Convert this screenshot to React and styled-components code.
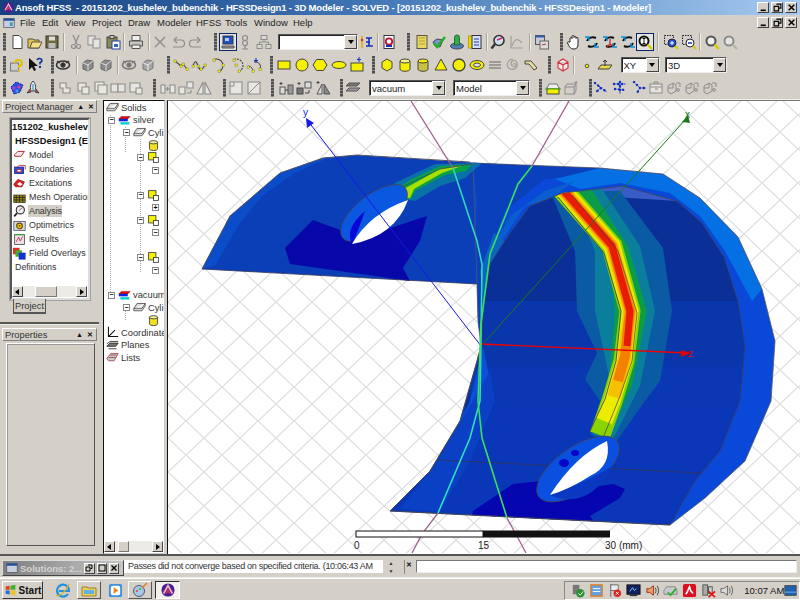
import React from 'react';
import styled, { createGlobalStyle } from 'styled-components';

const Global = createGlobalStyle`
  html, body { margin: 0; padding: 0; background: #d4d0c8; overflow: hidden; }
  * { box-sizing: border-box; }
  svg { flex: none; }
`;
const FONT = `"Liberation Sans", Arial, sans-serif`;

const Page = styled.div`
  width: 800px; height: 600px; background: #d4d0c8; display: flex; flex-direction: column;
  font-family: ${FONT}; font-size: 9px; color: #111; overflow: hidden;
`;
const TitleBar = styled.div`
  height: 15px; flex: none; display: flex; align-items: center; padding: 0 2px 0 3px;
  background: linear-gradient(90deg, #17407f 0%, #3f74b4 45%, #a6caf0 100%);
`;
const TitleText = styled.div`
  flex: 1; min-width: 0; margin-left: 1px; color: #fff; font: bold 9.5px ${FONT}; white-space: nowrap; letter-spacing: -0.17px; overflow: hidden;
`;
const WinButtons = styled.div`display: flex; gap: 2px; margin-right: 1px; flex: none;`;
const WinBtn = styled.div`
  width: 12px; height: 11px; background: #d4d0c8; border: 1px solid; border-color: #fff #404040 #404040 #fff;
  display: flex; align-items: center; justify-content: center;
`;
const MenuBar = styled.div`
  height: 15px; flex: none; display: flex; align-items: center; padding: 0 2px 0 3px; font-size: 9.5px;
`;
const MenuList = styled.div`display: flex; flex: 1; padding-left: 5px;`;
const MenuItem = styled.span`width: ${p => p.$w}px; color: #222; white-space: nowrap;`;

const ToolRow = styled.div`
  height: ${p => p.$h}px; flex: none; display: flex; align-items: center;
`;
const Grip = styled.div`
  flex: none; width: 3px; height: 18px; margin-left: ${p => p.$ml}px;
  background: repeating-linear-gradient(180deg, #505050 0 2px, #8a8a8a 2px 3px);
`;
const Sep = styled.div`
  flex: none; width: 2px; height: 18px; margin-left: ${p => p.$ml}px;
  border-left: 1px solid #a8a498; border-right: 1px solid #eeeeea;
`;
const ToolBtn = styled.div`
  flex: none; width: 18px; height: 18px; margin-left: ${p => p.$ml}px; display: flex; align-items: center; justify-content: center;
  ${p => p.$on && `border: 1px solid #0a246a; background: #e6e4de;`}
`;
const Combo = styled.div`
  flex: none; width: ${p => p.$w}px; height: 16px; margin-left: ${p => p.$ml}px; background: #fff;
  border: 1px solid; border-color: #555 #eee #eee #555; display: flex; align-items: center; padding-left: 2px;
  font-size: 9.5px; color: #222; box-shadow: inset 1px 1px 0 #222;
`;
const ComboText = styled.span`flex: 1; overflow: hidden; white-space: nowrap;`;
const ComboArrow = styled.div`
  flex: none; width: 13px; height: 14px; background: #d4d0c8; border: 1px solid; border-color: #fff #444 #444 #fff;
  display: flex; align-items: center; justify-content: center;
  &::after { content: ''; border: 3px solid transparent; border-top: 4px solid #000; margin-top: 3px; }
`;

const Main = styled.div`height: 455px; flex: none; display: flex; min-height: 0; border-top: 1px solid #efefe9;`;
const LeftCol = styled.div`width: 100px; flex: none; display: flex; flex-direction: column; padding: 0 3px 8px 2px;`;
const PaneHead = styled.div`
  height: 13px; flex: none; border: 1px solid; border-color: #fff #808080 #808080 #fff; white-space: nowrap;
  display: flex; align-items: center; padding: 0 3px 0 2px; font-size: 9.3px; color: #333;
`;
const PaneTitle = styled.span`flex: 1;`;
const PaneBtn = styled.span`margin-left: 4px; font-size: 7px; font-weight: bold; color: #111;`;
const ProjectWrap = styled.div`padding: 5px 0 0 8px; display: flex; flex-direction: column;`;
const ProjectBox = styled.div`
  width: 80px; height: 182px; background: #fff; border: 2px solid; border-color: #555 #ddd #ddd #555;
  display: flex; flex-direction: column; overflow: hidden; outline: 1px solid #a0a0a0;
`;
const ProjectList = styled.div`flex: 1; overflow: hidden;`;
const ProjRow = styled.div`
  height: 14px; display: flex; align-items: center; white-space: nowrap; font-size: ${p => p.$bold ? 9.3 : 8.9}px; color: ${p => p.$bold ? '#111' : '#333'};
  padding-left: ${p => p.$pad}px; font-weight: ${p => p.$bold ? 'bold' : 'normal'};
`;
const ProjIcon = styled.span`width: 15px; flex: none; display: flex; justify-content: center; margin-right: 1px;`;
const ProjLabel = styled.span`background: ${p => p.$sel ? '#d4d0c8' : 'transparent'}; padding: 1px 0 1px 1px;`;
const HScroll = styled.div`
  height: 11px; flex: none; display: flex; background: #ecebe6; margin: 0 1px 1px 0;
`;
const ScrollBtn = styled.div`
  width: 11px; background: #d4d0c8; border: 1px solid; border-color: #fff #444 #444 #fff;
  display: flex; align-items: center; justify-content: center;
  &::after { content: ''; border: 3px solid transparent; ${p => p.$dir === 'l' ? 'border-right: 4px solid #000; margin-left: -4px;' : 'border-left: 4px solid #000; margin-left: 4px;'} }
`;
const ScrollTrack = styled.div`flex: 1; padding-left: ${p => p.$pad}px;`;
const Thumb = styled.div`
  width: ${p => p.$w}px; height: 100%; background: #d4d0c8; border: 1px solid; border-color: #fff #777 #777 #fff;
`;
const Tab = styled.div`
  margin: -1px 0 0 3px; width: 33px; height: 15px; border: 1px solid #555; border-top: none; background: #d4d0c8;
  border-bottom: 2px solid #555; font-size: 9.3px; display: flex; align-items: center; justify-content: center; color: #333;
`;
const Divider = styled.div`height: 3px; flex: none; margin: 8px -2px 3px -2px; background: #555; border-bottom: 1px solid #eee;`;
const PropsBox = styled.div`
  flex: 1; margin: 2px 2px 0 4px; border: 1px solid; border-color: #fff #555 #555 #fff; background: #d4d0c8; box-shadow: inset 1px 1px 0 #999;
`;

const TreeCol = styled.div`
  width: 62px; flex: none; margin-left: 3px; background: #fff; border: 1px solid; border-color: #111 #ccc #ccc #111;
  display: flex; flex-direction: column; position: relative; overflow: hidden;
`;
const TreeBody = styled.div`flex: 1; padding-top: 0.5px;`;
const TreeGuide = styled.svg`position: absolute; left: 0; top: 0; pointer-events: none;`;
const TreeRow = styled.div`
  position: relative; height: 12.5px; display: flex; align-items: center; padding-left: ${p => p.$pad}px; white-space: nowrap; font-size: 9.3px; color: #333; gap: 2px;
`;
const Expander = styled.span`
  width: 7px; height: 7px; flex: none; background: #fff; border: 1px solid #888; display: flex; align-items: center; justify-content: center;
  font: bold 7px/6px ${FONT}; color: #000; margin-right: 1px;
`;
const CanvasWrap = styled.div`flex: 1; margin-left: 2px; border-left: 1px solid #111; border-top: 1px solid #777; background: #fff; min-width: 0; overflow: hidden;`;
const CanvasSvg = styled.svg`display: block;`;

const DockBar = styled.div`
  height: 24px; flex: none; border-top: 2px solid #555; display: flex; align-items: flex-start; padding: 4px 2px 0 2px;
  border-bottom: 1px solid #efefe9;
`;
const MiniWin = styled.div`
  width: 122px; height: 16px; flex: none; background: linear-gradient(90deg, #7f7f7f, #c6c6c6); display: flex; align-items: center; padding: 0 4px 0 3px;
  border: 1px solid; border-color: #ddd #444 #444 #ddd;
`;
const MiniTitle = styled.span`flex: 1; margin-left: 2px; font: bold 9.5px ${FONT}; color: #d4d4d4; white-space: nowrap;`;
const MiniBtn = styled.div`
  width: 12px; height: 11px; margin-left: 2px; background: #d4d0c8; border: 1px solid; border-color: #fff #444 #444 #fff; display: flex; align-items: center; justify-content: center;
`;
const StatusField = styled.div`
  width: 259px; height: 13px; flex: none; background: #fff; padding-left: 4px; font-size: 9px; letter-spacing: -0.3px; color: #333; white-space: nowrap; overflow: hidden; line-height: 13px;
`;
const Spinner = styled.div`flex: none; width: 12px; height: 14px; margin-left: 2px; display: flex; flex-direction: column; justify-content: space-between; align-items: center; font-size: 5px; line-height: 6px; color: #333;`;
const DockClose = styled.div`
  flex: none; width: 8px; height: 14px; margin-left: 7px; font: bold 7px/10px ${FONT}; text-align: center; color: #111; border-left: 1px solid #888;
`;
const CmdInput = styled.div`
  flex: 1; margin-left: 4px; margin-right: 1px; height: 13px; background: #fff; border: 1px solid; border-color: #777 #eee #eee #777;
`;

const Taskbar = styled.div`height: 22px; flex: none; display: flex; align-items: center; padding: 1px 0 0 2px; border-top: 1px solid #fff;`;
const StartBtn = styled.div`
  width: 41px; height: 18px; flex: none; border: 1px solid; border-color: #fff #333 #333 #fff; display: flex; align-items: center; justify-content: center; gap: 2px;
  font: bold 10px ${FONT}; color: #111;
`;
const TaskIcon = styled.div`
  flex: none; width: ${p => p.$w}px; height: 18px; margin-left: ${p => p.$ml}px; display: flex; align-items: center; justify-content: center;
  ${p => p.$raised && `border: 1px solid; border-color: #fff #555 #555 #fff;`}
  ${p => p.$active && `border: 1px solid; border-color: #333 #fff #fff #333; background: #f2f0ea;`}
`;
const Tray = styled.div`
  margin-left: auto; height: 19px; width: 236px; flex: none; display: flex; align-items: center; border: 1px solid; border-color: #888 #fff #fff #888; padding-left: 3px;
`;
const TrayIcon = styled.div`flex: none; width: ${p => p.$w || 18.7}px; display: flex; justify-content: center;`;
const Clock = styled.span`flex: none; margin-left: 8px; width: 38px; font-size: 9.5px; color: #111; white-space: nowrap;`;

const Ic = ({ s = 16, children }) => <svg width={s} height={s} viewBox="0 0 16 16">{children}</svg>;

const gr = '#8c8c8c', dk = '#555', yl = '#f4f000';
const zoomI = (c, inner) => <g><circle cx="7" cy="7" r="4.5" fill={inner || '#fff'} stroke={c} strokeWidth="2" /><path d="M10.5 10.5 15 15" stroke={c === gr ? '#b5b5a0' : '#d8c800'} strokeWidth="2.4" /></g>;
const rot = (c1, c2, extra) => <g fill="none" strokeWidth="2"><path d="M3 7a6 5 0 0 1 9-3" stroke={c1} /><path d="M13 9a6 5 0 0 1-9 3" stroke={c2} /><path d="M1 3h4v4M15 13h-4V9" stroke="#0090e0" strokeWidth="1.4" />{extra}</g>;
const eye = (c) => <g fill="none" stroke={c}><ellipse cx="8" cy="8" rx="6.5" ry="4" strokeWidth="1.6" /><circle cx="8" cy="8" r="2.2" fill={c} /><path d="M2 4l3 2M14 4l-3 2" strokeWidth="1.4" /></g>;
const grayShape = (d) => <path d={d} fill="#e8e6e0" stroke={gr} strokeWidth="1.1" />;
const pts = (list) => list.map(([x, y], i) => <rect key={i} x={x - 1} y={y - 1} width="2.4" height="2.4" fill={yl} stroke="#333" strokeWidth=".3" />);
const blueDots = (d) => <g><path d={d} fill="none" stroke="#1030c0" strokeWidth="1" strokeDasharray="1.5 1" /><path d={d} fill="none" stroke="#1030c0" strokeWidth="2.4" strokeDasharray=".1 4" strokeLinecap="round" /></g>;
const cluster = <g fill="none" stroke={gr} strokeWidth="1"><path d="M2 6l5-3 3 2v6l-5 3-3-2zM7 3v5l-5 0M10 3h4v4" /><circle cx="12" cy="10" r="1.4" /></g>;

const ICONS = {
  new: <path d="M4 1.5h6l3 3v10H4z" fill="#fff" stroke="#444" />,
  open: <g><path d="M1 5h5l1 1h5v8H1z" fill="#e6c44c" stroke="#554" /><path d="M3 14l2-6h10l-3 6z" fill="#f5e08a" stroke="#554" /></g>,
  save: <g><rect x="2" y="2" width="12" height="12" fill="#6c6c3a" stroke="#333" /><rect x="5" y="2.5" width="6" height="4" fill="#ddd" /><rect x="4.5" y="9" width="7" height="5" fill="#bbb" /></g>,
  cut: <g fill="none" stroke={gr} strokeWidth="1.2"><path d="M5 1l4 9M11 1L7 10" /><circle cx="5.5" cy="12.5" r="2" /><circle cx="10.5" cy="12.5" r="2" /></g>,
  copy: <g fill="#e6e4de" stroke={gr}><rect x="2" y="2" width="7" height="9" /><rect x="7" y="5" width="7" height="9" /></g>,
  paste: <g><rect x="2" y="3" width="10" height="11" fill="#8a8a50" stroke="#444" /><rect x="5" y="1.5" width="4" height="3" fill="#ccc" stroke="#444" /><rect x="7" y="7" width="8" height="8" fill="#fff" stroke="#2040a0" /><rect x="9" y="10" width="4" height="3" fill="#3060c0" /></g>,
  print: <g fill="#c8c8c0" stroke={dk}><path d="M4 1.5h8v5H4z" fill="#eee" /><path d="M1.5 7h13v5h-13z" /><path d="M4 11h8v3.5H4z" fill="#eee" /></g>,
  xg: <path d="M3 3l10 10M13 3L3 13" stroke={gr} strokeWidth="1.4" />,
  undo: <g fill="none" stroke={gr} strokeWidth="1.2"><path d="M4 6h7a3.5 3.5 0 0 1 0 7H3" /><path d="M7 3L4 6l3 3" /></g>,
  redo: <g fill="none" stroke={gr} strokeWidth="1.2"><path d="M12 6H5a3.5 3.5 0 0 0 0 7h8" /><path d="M9 3l3 3-3 3" /></g>,
  monitor: <g><rect x="3" y="2" width="10" height="8" fill="#2050c8" stroke="#334" /><path d="M2 12h12v2H2z" fill="#999" stroke="#555" /><rect x="5" y="4" width="4" height="3" fill="#bcd" /></g>,
  mon2: <g fill="none" stroke={gr} strokeWidth="1.2"><circle cx="8" cy="4" r="2.5" /><circle cx="8" cy="9" r="2.5" /><path d="M8 12v3M5 15h6" /></g>,
  net: <g fill="#d8d8d0" stroke={gr}><rect x="5" y="1.5" width="6" height="4" /><rect x="1" y="10.5" width="5" height="4" /><rect x="10" y="10.5" width="5" height="4" /><path d="M8 6v2M3.5 10V8h9v2" fill="none" /></g>,
  pipe: <g fill="none" strokeWidth="1.6"><path d="M3 2v12" stroke="#e0b000" /><path d="M7 4h6M7 8h4M7 12h7M10 4v8" stroke="#1030c0" /><circle cx="3" cy="6" r="1.2" fill="#e02020" stroke="none" /></g>,
  oicon: <g><rect x="3" y="1.5" width="10" height="13" fill="#fff" stroke="#334" /><circle cx="8" cy="7.5" r="3.2" fill="none" stroke="#c01030" strokeWidth="1.8" /><path d="M5 12h6" stroke="#1030c0" strokeWidth="2" /></g>,
  ydoc: <g><rect x="3" y="1.5" width="10" height="13" fill="#e8d860" stroke="#554" /><path d="M5.5 4h5M5.5 7h5M5.5 10h5" stroke="#806000" strokeDasharray="1 1" /></g>,
  check: <g><path d="M2 8l4-3 6 1-3 7-5-1z" fill="#8090d0" stroke="#446" /><path d="M3 9l3 4 8-10" fill="none" stroke="#20b020" strokeWidth="2.4" /></g>,
  fig: <g><ellipse cx="8" cy="12" rx="6.5" ry="3" fill="#5080b0" stroke="#446" /><path d="M8 1a2.5 2.5 0 0 1 2.5 2.5V11h-5V3.5A2.5 2.5 0 0 1 8 1z" fill="#30b040" stroke="#264" /></g>,
  ydoc2: <g><rect x="1.5" y="2" width="4" height="12" fill="#f0d800" stroke="#aa0" /><rect x="5" y="1.5" width="9" height="13" fill="#d8e0f8" stroke="#334" /><path d="M7 5h5M7 8h5M7 11h5" stroke="#2040b0" /></g>,
  glass: <g><circle cx="9" cy="6.5" r="5" fill="#d0e0f0" stroke="#333" strokeWidth="1.6" /><path d="M5 10l-3.5 4.5" stroke="#333" strokeWidth="2.4" /><path d="M7 6l5-2" stroke="#d02070" strokeWidth="1.4" /></g>,
  curveg: <g fill="none" stroke="#a0a098" strokeWidth="1.2"><path d="M2 2v12h12" /><path d="M3 12C6 4 9 4 13 9" /></g>,
  win: <g><rect x="1.5" y="1.5" width="9" height="9" fill="#c8c8d8" stroke="#555" /><rect x="1.5" y="1.5" width="9" height="2" fill="#3060b0" /><rect x="6" y="7" width="8.5" height="8" fill="#ddd" stroke="#666" /><path d="M8 11l4-1" stroke="#c03030" /></g>,
  hand: <path d="M4 8V4.5a1 1 0 0 1 2 0V2.5a1 1 0 0 1 2 0v1a1 1 0 0 1 2 0v1a1 1 0 0 1 2 0V10c0 3-1 5-4 5s-4-1-6-5l-.5-1.2c-.3-1 1-1.4 1.5-.6z" fill="#fff" stroke="#222" />,
  rot1: rot('#111', '#111'),
  rot2: rot('#111', '#111', <g><path d="M8 5v5M8 10l-3 3M8 10l3 2" stroke="#d02020" strokeWidth="1.2" /></g>),
  rot3: rot('#111', '#111'),
  zoomOn: <g>{zoomI('#111', '#fff')}<path d="M7 4.5v5M5.5 4.5h3M5.5 9.5h3" stroke="#111" /></g>,
  zin: <g><rect x="1.5" y="1.5" width="9" height="9" fill="none" stroke="#222" strokeDasharray="1.5 1" /><circle cx="9" cy="9" r="4" fill="#2050e0" stroke="#223" /><path d="M7 9h4M9 7v4" stroke="#fff" /><path d="M12 12l3 3" stroke="#d8c800" strokeWidth="2" /></g>,
  zout: <g><rect x="1.5" y="1.5" width="9" height="9" fill="none" stroke="#222" strokeDasharray="1.5 1" /><circle cx="9" cy="9" r="4" fill="#fff" stroke="#223" /><path d="M7 9h4" stroke="#2040c0" strokeWidth="1.6" /><path d="M12 12l3 3" stroke="#d8c800" strokeWidth="2" /></g>,
  zy: zoomI('#555', '#eee'),
  zg: zoomI(gr, '#e6e4de'),
  help: <g><rect x="1.5" y="6" width="8" height="8" fill="#ccc" stroke="#777" /><path d="M6 6a3.5 3 0 1 1 4 3v2" fill="none" stroke="#e0c000" strokeWidth="2" /><rect x="9" y="12.500" width="2" height="2" fill="#e0c000" /></g>,
  what: <g><path d="M2 1v12l3-3 2 4 2-1-2-4h4z" fill="#111" /><path d="M10 3a2.500 2 0 1 1 3 2.500v2" fill="none" stroke="#1030a0" strokeWidth="1.600" /><rect x="12" y="9" width="2" height="2" fill="#1030a0" /></g>,
  eye: eye('#333'),
  eye2: eye('#777'),
  cubeEye: <g><path d="M3 6l4-3 6 1v7l-5 3-5-2z" fill="#8a8a8a" stroke="#666" /><path d="M3 6l5 2 5-4M8 8v6" fill="none" stroke="#ddd" /></g>,
  cubeEye2: <g><path d="M3 6l4-3 6 1v7l-5 3-5-2z" fill="#a4a4a4" stroke="#777" /><path d="M3 6l5 2 5-4M8 8v6" fill="none" stroke="#eee" /></g>,
  poly: <g><path d="M2 4l6 5 2-2 4 5" fill="none" stroke="#444" strokeWidth="1.1" />{pts([[2, 4], [8, 9], [10, 7], [14, 12]])}</g>,
  spline: <g><path d="M2 9c2-7 4-4 5 0s4 5 7-1" fill="none" stroke="#444" strokeWidth="1.1" />{pts([[2, 9], [7, 9], [14, 8], [10, 12]])}</g>,
  arc3: <g><path d="M4 2.5a6 6 0 0 1 5 12" fill="none" stroke="#444" strokeWidth="1.1" />{pts([[4, 3], [9, 14], [13, 8]])}</g>,
  arc4: <g><path d="M5 2.5a6 6 0 0 1 5 12" fill="none" stroke="#444" strokeWidth="1.1" strokeDasharray="2 1" />{pts([[5, 3], [10, 14], [7, 8]])}</g>,
  arcp: <g><path d="M1 10c3-2 5 0 6 4M8 5a5 5 0 0 1 6 7" fill="none" stroke="#444" />{pts([[2, 10], [7, 14], [14, 12]])}<path d="M10 1v5M8 3.500h4" stroke="#1030c0" /></g>,
  rect: <rect x="2" y="4" width="12" height="8" fill={yl} stroke="#444" />,
  circ: <circle cx="8" cy="8" r="6" fill={yl} stroke="#444" />,
  hex: <path d="M4.5 2.5h7L15 8l-3.5 5.5h-7L1 8z" fill={yl} stroke="#444" />,
  ell: <ellipse cx="8" cy="8" rx="7" ry="3.5" fill={yl} stroke="#444" />,
  rectp: <g><rect x="2" y="6" width="12" height="8" fill={yl} stroke="#444" /><path d="M10 0v5M8 2.500h4" stroke="#1030c0" /></g>,
  box: <path d="M3 5l5-3 5 3v6l-5 3-5-3z" fill={yl} stroke="#444" />,
  cyl: <g><path d="M3 4v8c0 3 10 3 10 0V4z" fill={yl} stroke="#444" /><ellipse cx="8" cy="4" rx="5" ry="2" fill="#f8f880" stroke="#444" /></g>,
  cyl2: <g><path d="M3 4v8c0 3 10 3 10 0V4z" fill="#c8c040" stroke="#444" /><ellipse cx="8" cy="4" rx="5" ry="2" fill={yl} stroke="#444" /></g>,
  cone: <g><path d="M8 2l6 11H2z" fill={yl} stroke="#444" /></g>,
  sph: <circle cx="8" cy="8" r="6" fill={yl} stroke="#444" strokeWidth="1.3" />,
  tor: <g><ellipse cx="8" cy="8" rx="7" ry="4.5" fill={yl} stroke="#444" /><ellipse cx="8" cy="8" rx="3.5" ry="2" fill="#ddd" stroke="#444" /></g>,
  stackg: <g fill="none" stroke="#888" strokeWidth="1.6"><path d="M2 5h12M2 8h12M2 11h12" /></g>,
  spir: <path d="M8 8a1.5 1.5 0 1 1 1.5 1.5A3 3 0 1 1 12 6a5 5 0 1 1-4-3.5" fill="none" stroke="#a0a098" strokeWidth="1.2" />,
  bend: <path d="M2 4h6l6 7-3 2-5-6H2z" fill="#e8e0a0" stroke="#444" />,
  redcube: <path d="M3 5l5-3 5 3v6l-5 3-5-3zM3 5l5 3 5-3M8 8v6" fill="#f8e8e8" stroke="#d03040" strokeWidth="1.1" />,
  dot: <circle cx="8" cy="9" r="1.8" fill={yl} stroke="#554" />,
  plane: <g><path d="M1 12l3-4h11l-3 4z" fill="#e8d848" stroke="#444" /><path d="M8 9V3M6 5l2-2 2 2" stroke="#333" fill="none" /></g>,
  cluster1: <g><path d="M2 7l5-5 7 3-3 7-6 2z" fill="#3050e0" stroke="#1020a0" strokeDasharray="2 .8" /><circle cx="5" cy="8" r="1.6" fill="#b040e0" /><circle cx="10" cy="7" r="1.6" fill="#e04090" /><circle cx="8" cy="11" r="1.6" fill="#40a0f0" /></g>,
  rocket: <g><path d="M8 1c3 3 3 7 2 10H6C5 8 5 4 8 1z" fill="#e8f0f0" stroke="#345" /><path d="M6 8L2 13l4-1M10 8l4 5-4-1" fill="#d04030" stroke="#345" /><path d="M8 4v7" stroke="#2080b0" /></g>,
  g1: grayShape('M3 3h6v5h4v5H6V8H3z'),
  g2: <g>{grayShape('M3 3h8v8H3z')}{grayShape('M7 7h7v7H7z')}</g>,
  g3: <g>{grayShape('M2 2h9v9H2z')}{grayShape('M5 5h9v9H5z')}</g>,
  g4: <g>{grayShape('M1 4h7v8H1z')}{grayShape('M8 4h7v8H8z')}</g>,
  g5: <g>{grayShape('M2 3h10v9H2z')}{grayShape('M8 8h6v6H8z')}</g>,
  g6: <g>{grayShape('M1 5h4v8H1z')}{grayShape('M10 5h5v8h-5z')}<path d="M5 9h5M7.5 7v4" stroke={gr} /></g>,
  g7: <g>{grayShape('M1 7h6v7H1z')}{grayShape('M9 2h6v6H9z')}<path d="M13 10v3H9" fill="none" stroke={gr} /></g>,
  g8: <g>{grayShape('M7 2v12H1z')}{grayShape('M9 2v12h6z')}</g>,
  g9: <g>{grayShape('M2 2h12v12H2z')}<path d="M2 6h4V2" fill="none" stroke={gr} /></g>,
  g10: <g>{grayShape('M2 2h12v12H2z')}<path d="M14 2L8 8 2 14" fill="none" stroke={gr} /></g>,
  d6: <g><path d="M3 2v3M1.500 3.500h3" stroke="#444" /><rect x="2" y="7" width="5" height="7" fill="#ddd" stroke="#555" /><rect x="10" y="5" width="5" height="9" fill="#999" stroke="#555" /><path d="M7 10h3" stroke="#444" /></g>,
  d7: <g><rect x="1" y="8" width="6" height="6" fill="#777" stroke="#444" /><rect x="9" y="2" width="6" height="6" fill="#ddd" stroke="#555" /><path d="M3 2v3M1.500 3.500h3M13 10v3H9" stroke="#444" fill="none" /></g>,
  d8: <g><path d="M7 4v10H2z" fill="#ddd" stroke="#555" /><path d="M9 4v10h6z" fill="#888" stroke="#555" /><path d="M3 1v3M1.500 2.500h3" stroke="#444" /></g>,
  stack2: <g fill="#777" stroke="#555"><path d="M1 6l3-3h11l-3 3z" /><path d="M1 11l3-3h11l-3 3z" fill="#999" /></g>,
  ybox: <g><rect x="2" y="8" width="12" height="6" fill={yl} stroke="#444" /><path d="M2 8l2-4h8l2 4" fill="#eee" stroke="#777" /><path d="M0 9h16" stroke="#30a030" /></g>,
  gbox: <g fill="none" stroke={gr}><rect x="2" y="7" width="9" height="7" /><path d="M2 7l2-3h9l-2 3M13 4v7l-2 3" /><path d="M13 1v3M11.500 2.500h3" /></g>,
  b1: blueDots('M2 3l6 5-5 4M8 8l6 4'),
  b2: blueDots('M2 4h12M8 2v12M3 9l10 1'),
  b3: blueDots('M2 2l6 6h6M8 8l-3 5'),
  gwin: <g fill="none" stroke={gr}><rect x="2" y="4" width="12" height="9" fill="#e6e4de" /><path d="M2 7h12M7 9h3" /><path d="M6 4V2h4v2" /></g>,
  c1: cluster,
};

const R1 = [
  ['g', 4], ['i', 17, 'new'], ['i', 35, 'open'], ['i', 52, 'save'], ['s', 64], ['i', 76, 'cut'], ['i', 94, 'copy'], ['i', 113, 'paste'], ['s', 124],
  ['i', 136, 'print'], ['s', 149], ['i', 160, 'xg'], ['i', 178, 'undo'], ['i', 196, 'redo'], ['g', 215], ['a', 228, 'monitor'], ['i', 245, 'mon2'], ['i', 264, 'net'],
  ['c', 318, '', 80], ['i', 367, 'pipe'], ['s', 378], ['i', 389, 'oicon'], ['g', 408], ['i', 422, 'ydoc'], ['i', 439, 'check'], ['i', 457, 'fig'], ['i', 475, 'ydoc2'], ['s', 487],
  ['i', 498, 'glass'], ['i', 517, 'curveg'], ['s', 530], ['i', 542, 'win'], ['g', 561], ['i', 574, 'hand'], ['i', 592, 'rot1'], ['i', 610, 'rot2'], ['i', 628, 'rot3'], ['a', 645, 'zoomOn'],
  ['s', 658], ['i', 671, 'zin'], ['i', 689, 'zout'], ['s', 700], ['i', 712, 'zy'], ['i', 730, 'zg'],
];
const R2 = [
  ['g', 4], ['i', 17, 'help'], ['i', 35, 'what'], ['g', 52], ['i', 63, 'eye'], ['s', 77], ['i', 88, 'cubeEye'], ['i', 106, 'cubeEye'], ['s', 118], ['i', 129, 'eye2'], ['i', 148, 'cubeEye2'],
  ['g', 168], ['i', 181, 'poly'], ['i', 199, 'spline'], ['i', 218, 'arc3'], ['i', 237, 'arc4'], ['i', 254, 'arcp'], ['g', 271], ['i', 284, 'rect'], ['i', 302, 'circ'], ['i', 320, 'hex'], ['i', 339, 'ell'], ['i', 357, 'rectp'],
  ['g', 373], ['i', 387, 'box'], ['i', 405, 'cyl'], ['i', 423, 'cyl2'], ['i', 441, 'cone'], ['i', 459, 'sph'], ['i', 477, 'tor'], ['i', 495, 'stackg'], ['i', 513, 'spir'], ['i', 531, 'bend'],
  ['g', 549], ['i', 563, 'redcube'], ['s', 574], ['i', 587, 'dot'], ['i', 605, 'plane'], ['c', 640, 'XY', 39], ['c', 696, '3D', 62],
];
const R3 = [
  ['g', 4], ['i', 17, 'cluster1'], ['i', 33, 'rocket'], ['g', 52], ['i', 65, 'g1'], ['i', 83, 'g2'], ['i', 101, 'g3'], ['i', 118, 'g4'], ['i', 136, 'g5'], ['g', 154], ['i', 168, 'g6'], ['i', 186, 'g7'], ['i', 204, 'g8'],
  ['g', 224], ['i', 236, 'g9'], ['i', 254, 'g10'], ['g', 272], ['i', 286, 'd6'], ['i', 304, 'd7'], ['i', 323, 'd8'], ['g', 341], ['i', 353, 'stack2'], ['c', 407.500, 'vacuum', 77], ['c', 491.500, 'Model', 77],
  ['g', 540], ['i', 553, 'ybox'], ['i', 571, 'gbox'], ['g', 590], ['i', 601, 'b1'], ['i', 620, 'b2'], ['i', 640, 'b3'], ['i', 656, 'gwin'], ['i', 674, 'c1'], ['i', 692, 'c1'], ['i', 710, 'c1'],
];

const Strip = ({ items, h }) => {
  let x = 0;
  return (
    <ToolRow $h={h}>
      {items.map(([t, c, n, cw], i) => {
        const w = t === 'g' ? 3 : t === 's' ? 2 : t === 'c' ? cw : 18;
        const ml = c - w / 2 - x;
        x = c + w / 2;
        if (t === 'g') return <Grip key={i} $ml={ml} />;
        if (t === 's') return <Sep key={i} $ml={ml} />;
        if (t === 'c') return <Combo key={i} $ml={ml} $w={w}><ComboText>{n}</ComboText><ComboArrow /></Combo>;
        return <ToolBtn key={i} $ml={ml} $on={t === 'a'}><Ic>{ICONS[n]}</Ic></ToolBtn>;
      })}
    </ToolRow>
  );
};

const MENUS = [['File', 22], ['Edit', 23], ['View', 27], ['Project', 36], ['Draw', 29], ['Modeler', 39], ['HFSS', 29], ['Tools', 29], ['Window', 39], ['Help', 30]];

const Caption = () => (
  <WinButtons>
    <WinBtn><Ic s={9}><path d="M3 13h9" stroke="#000" strokeWidth="3" /></Ic></WinBtn>
    <WinBtn><Ic s={9}><path d="M6 2h8v7h-3M2 6h8v8H2z" fill="none" stroke="#000" strokeWidth="2" /></Ic></WinBtn>
    <WinBtn><Ic s={9}><path d="M3 3l10 10M13 3L3 13" stroke="#000" strokeWidth="2.6" /></Ic></WinBtn>
  </WinButtons>
);

const AppLogo = ({ s = 13 }) => (
  <Ic s={s}>
    <circle cx="8" cy="8" r="7.5" fill="#4a1f90" />
    <path d="M3 12 8 3l5 9" fill="none" stroke="#f0b0c0" strokeWidth="2" />
    <path d="M6 12 8 8l2 4" fill="none" stroke="#e03050" strokeWidth="1.6" />
  </Ic>
);

const PROJ_ICONS = {
  Model: <path d="M2 7l4-4h8l-4 6H2z" fill="#f0e8e8" stroke="#b03040" strokeWidth="1.2" />,
  Boundaries: <g><rect x="2" y="5" width="11" height="8" fill="#3050d0" stroke="#1020a0" /><rect x="5" y="8" width="5" height="3" fill="#fff" stroke="#c02020" /><path d="M5 5l3-2h7v5" fill="none" stroke="#c02020" /></g>,
  Excitations: <g><path d="M1 9l5-6 8 3-3 6H3z" fill="#e02020" stroke="#a01010" /><path d="M5 9l3-3 4 3-3 2z" fill="#fff" /></g>,
  'Mesh Operation': <g><rect x="1" y="5" width="14" height="9" fill="#a09000" stroke="#333" /><path d="M1 8h14M1 11h14M4 5v9M8 5v9M12 5v9" stroke="#222" /></g>,
  Analysis: <g><circle cx="9" cy="6" r="5" fill="#e8f0f4" stroke="#333" strokeWidth="1.4" /><path d="M5 10l-3.500 4" stroke="#222" strokeWidth="2.200" /><path d="M7 7l5-4" stroke="#c03050" /></g>,
  Optimetrics: <g><rect x="1" y="3" width="14" height="11" fill="#d0d8f0" stroke="#555" /><circle cx="8" cy="8.500" r="3.500" fill="#f0d000" stroke="#704000" strokeWidth="1.400" /><circle cx="8" cy="8.500" r="1" fill="#333" /></g>,
  Results: <g><rect x="2" y="2" width="12" height="12" fill="#f0e4e8" stroke="#444" /><path d="M4 11l3-6 2 5 3-6" fill="none" stroke="#c02050" /><path d="M2 2h12" stroke="#30a040" strokeWidth="1.600" /></g>,
  'Field Overlays': <g><rect x="0" y="1" width="8" height="8" fill="#e03020" /><rect x="3" y="4" width="8" height="8" fill="#40b030" /><rect x="7" y="7" width="8.500" height="8.500" fill="#1030d0" /></g>,
};
const PROJ = ['Model', 'Boundaries', 'Excitations', 'Mesh Operation', 'Analysis', 'Optimetrics', 'Results', 'Field Overlays'];

const stackIcon = <g><path d="M1 6l3-3h11l-3 3z" fill="#e01010" stroke="#800" strokeWidth=".6" /><rect x="1" y="6" width="11" height="3" fill="#1020e0" /><rect x="3" y="10" width="11" height="3" fill="#00d0d0" /></g>;
const cylIcon = <g><path d="M3 4v8c0 3 10 3 10 0V4z" fill="#f0e020" stroke="#333" /><ellipse cx="8" cy="4" rx="5" ry="2" fill="#f8f090" stroke="#333" /></g>;
const modelIcon = <path d="M1 9l4-6h10l-4 6z M1 9v3h10l4-6V3" fill="#d8d8d8" stroke="#555" strokeWidth="1.100" />;
const yBox = <g><rect x="2" y="2" width="9" height="9" fill="#f4f000" stroke="#333" /><rect x="8" y="8" width="6" height="6" fill="#fff" stroke="#333" /></g>;

const TREE = [
  { p: 2, icon: modelIcon, t: 'Solids' },
  { p: 4, ex: '−', icon: stackIcon, t: 'silver' },
  { p: 19, ex: '−', icon: modelIcon, t: 'Cyli' },
  { p: 43, icon: cylIcon },
  { p: 33, ex: '−', icon: yBox },
  { p: 48, ex: '−' },
  {},
  { p: 33, ex: '−', icon: yBox },
  { p: 48, ex: '+' },
  { p: 33, ex: '−', icon: yBox },
  { p: 48, ex: '−' },
  {},
  { p: 33, ex: '−', icon: yBox },
  { p: 48, ex: '−' },
  {},
  { p: 4, ex: '−', icon: stackIcon, t: 'vacuum' },
  { p: 19, ex: '−', icon: modelIcon, t: 'Cyli' },
  { p: 43, icon: cylIcon },
  { p: 2, icon: <g fill="none" stroke="#111" strokeWidth="1.300"><path d="M3 1v12h12" /><path d="M3 13l8-8" /></g>, t: 'Coordinate' },
  { p: 2, icon: <g><path d="M1 9l4-4h10l-3 4z" fill="#777" stroke="#222" /><path d="M1 6l4-3h10M3 12h10" stroke="#222" fill="none" /></g>, t: 'Planes' },
  { p: 2, icon: <g fill="#ccc" stroke="#a04050"><path d="M1 9l5-6h9l-5 9H3z" /><path d="M3 8h9M5 5h8" fill="none" /></g>, t: 'Lists' },
];

const OUTER = 'M473,162 L600,167 L663,173 L700,197 L738,236 L762,288 L775,340 L771,400 L745,460 L705,497 L670,524 L390,510 L430,470 L460,420 L477,360 L481,345 L478,320 L477,283 Z';
const INNER = 'M481,345 L484,300 L490,263 L510,232 L530,205 L563,192 L623,185 L677,200 L702,222 L724,256 L738,300 L745,345 L740,400 L720,450 L695,480 L670,524 L390,510 L430,470 L460,420 L477,360 Z';
const SHEET = 'M202,268 L230,215 L280,172 L323,157 L357,154 L480,162 L540,165 L500,230 L477,283 Z';

const Viewport = () => (
  <CanvasSvg width="632" height="452" viewBox="168 100 632 452">
    <defs>
      <pattern id="lat" width="36" height="34" patternUnits="userSpaceOnUse" patternTransform="translate(6 12)">
        <path d="M-2,-2 L38,36 M38,-2 L-2,36" stroke="#dedede" strokeWidth="1.200" fill="none" />
      </pattern>
      <clipPath id="innerClip"><path d={INNER} /></clipPath>
      <clipPath id="outerClip"><path d={OUTER} /></clipPath>
    </defs>
    <rect x="168" y="100" width="632" height="452" fill="url(#lat)" />

    <path d={SHEET} fill="#0b3fb8" />
    <path d="M202,268 L230,215 L280,172 L323,157 L330,156 L295,172 L262,195 L238,225 L215,265 Z" fill="#0b4cc8" />
    <path d="M285,247 L313,219 L343,230 L353,243 L390,227 L427,215 L420,240 L403,267 L410,280 L290,263 Z" fill="#0808aa" />
    <path d="M202,268 L230,215 L280,172 L323,157 L357,154 L470,161" fill="none" stroke="#556" strokeWidth="1" />
    <path d="M202,268 L477,283" fill="none" stroke="#335" strokeWidth=".8" />

    <path d={OUTER} fill="#0a48d8" />
    <g clipPath="url(#outerClip)">
      <path d="M473,162 L600,167 L600,172 L545,178 L505,210 L490,250 L482,330 L470,330 L477,200 Z" fill="#0b40bc" />
      <path d="M555,178 L600,167 L663,173 L700,197 L738,236 L762,288 L752,300 L725,250 L700,215 L670,192 L620,182 L580,188 Z" fill="#0470e4" />
      <path d="M492,248 L510,215 L545,190 L575,180 L550,198 L525,205 L505,235 Z" fill="#0a5ed0" />
      <path d="M480,270 L494,232 L504,240 L490,263 L486,320 Z" fill="#0a66c0" />
    </g>
    <path d={INNER} fill="#0a3098" />
    <g clipPath="url(#innerClip)">
      <path d="M575,186 L600,195 L677,200 L660,186 L625,182 Z" fill="#3a5cc8" />
      <rect x="470" y="300" width="300" height="66" fill="#0a36ac" />
      <rect x="470" y="366" width="300" height="40" fill="#0a38b4" />
      <rect x="380" y="406" width="380" height="130" fill="#0a36b8" />
      <path d="M483,345 L490,380 L482,430 L455,470 L440,459 L470,400 Z" fill="#0a50d8" />
      <path d="M438,459 L400,508 L440,510 L470,460 L495,400 L490,370 Z" fill="#0a40c4" />
      <path d="M473,510 L513,483 L540,480 L547,493 L613,483 L625,488 L620,497 L590,515 L600,530 L470,520 Z" fill="#0606b0" />

      <path d="M550,190 L575,250 L577,310 L597,352 L585,378 L600,400 L590,433 L613,445 L645,400 L660,380 L672,310 L663,247 L620,190 Z" fill="#0a5aa4" />
      <path d="M572,195 L595,250 L595,310 L610,380 L593,433 L612,440 L640,385 L655,310 L640,245 L600,185 Z" fill="#0a7e9c" />
      <path d="M578,190 L608,250 L615,310 L610,370 L595,432 L607,438 L632,385 L647,310 L628,245 L590,186 Z" fill="#0a9c48" />
      <path d="M562,188 L612,245 L630,310 L624,360 L612,400 L600,434" fill="none" stroke="#8ad200" strokeWidth="21" />
      <path d="M562,188 L612,245 L630,310 L624,360 L612,400 L604,420" fill="none" stroke="#ecec00" strokeWidth="17" />
      <path d="M562,188 L612,245 L630,310 L624,360 L614,396" fill="none" stroke="#f4c000" strokeWidth="13" />
      <path d="M562,188 L612,245 L630,310 L625,355 L618,380" fill="none" stroke="#f48000" strokeWidth="10" />
      <path d="M562,188 L612,245 L630,310 L627,345" fill="none" stroke="#e81c00" strokeWidth="7" />
      <path d="M558,196 L604,252 L621,310 L616,360 L605,398 L590,430" fill="none" stroke="#445" strokeWidth=".9" />
      <path d="M572,194 L618,250 L637,312 L632,360 L620,395 L603,437" fill="none" stroke="#445" strokeWidth=".7" />
      <path d="M438,459 L680,471 L800,476" fill="none" stroke="#335" strokeWidth=".8" />
    </g>
    <path d={OUTER} fill="none" stroke="#556" strokeWidth=".8" />
    <path d={INNER} fill="none" stroke="#445" strokeWidth=".7" />

    <path d="M385,192 L395,182 L435,163 L482,162 L465,177 L440,185 L415,200 L400,198 Z" fill="#0a70a8" />
    <path d="M397,188 L412,178 L440,165 L472,163 L466,170 L445,174 L415,190 L411,198 L400,198 Z" fill="#0aa048" />
    <path d="M402,196 L404,188 L440,168 L462,165 L442,172 L414,188 L410,197 Z" fill="#a8e000" />
    <path d="M400,187 L440,168 L472,163" fill="none" stroke="#445" strokeWidth=".7" />

    <ellipse cx="374" cy="212" rx="40" ry="18" transform="rotate(-38 374 212)" fill="#0a58e0" stroke="#445" strokeWidth=".8" />
    <path d="M352,243 Q344,228 365,210 Q355,238 352,243 Z" fill="#0606d8" />
    <path d="M352,243 Q370,212 408,199 Q395,235 352,243 Z" fill="#fff" />

    <ellipse cx="578" cy="468" rx="48" ry="22" transform="rotate(-35 578 468)" fill="#0a50e0" stroke="#445" strokeWidth=".8" />
    <path d="M549,494 Q590,510 612,465 Q590,480 549,494 Z" fill="#0a38c0" />
    <ellipse cx="564" cy="462" rx="5" ry="4" fill="#0606c8" />
    <ellipse cx="575" cy="452" rx="4" ry="3" fill="#0606c8" />
    <path d="M550,494 Q575,455 607,440 Q612,465 590,475 Q570,488 550,494 Z" fill="#fff" />

    <path d="M481,345 L308,120" stroke="#1818e8" strokeWidth="1" />
    <path d="M481,345 L686,118" stroke="#1a7a1a" strokeWidth="1" />
    <path d="M481,343 L688,352" stroke="#f00000" strokeWidth="1.400" />
    <path d="M306,117 L314,122 L307,127 Z" fill="#1818e8" />
    <path d="M688,114 L690,122 L682,121 Z" fill="#1a7a1a" />
    <path d="M681,349 L691,352 L681,356 Z" fill="#e00000" />
    <text x="303" y="115" fontFamily={FONT} fontSize="10" fill="#1818e8">y</text>
    <text x="685" y="117" fontFamily={FONT} fontSize="10" fill="#1a7a1a">x</text>
    <text x="688" y="356" fontFamily={FONT} fontSize="10" fill="#e00000">z</text>

    <g fill="none" strokeWidth="1.300">
      <path d="M411,100 L453,167" stroke="#a06090" />
      <path d="M453,167 L477,240 L482,263 L481,340" stroke="#30d8c0" strokeWidth="1.600" />
      <path d="M481,340 L480,400 L470,437 L438,512" stroke="#30e0c0" strokeWidth="1.600" />
      <path d="M438,512 L422,533 L412,552" stroke="#a06090" />
      <path d="M569,100 L532,165" stroke="#a06090" />
      <path d="M532,165 L518,183 L490,253 L481,323 L478,400 L482,437 L507,517" stroke="#38e060" strokeWidth="1.600" />
      <path d="M507,517 L518,537 L526,552" stroke="#a06090" />
    </g>

    <rect x="356" y="530" width="127" height="6" fill="#fff" stroke="#111" strokeWidth="1" />
    <rect x="483" y="529.500" width="127" height="7" fill="#111" />
    <text x="354" y="548" fontFamily={FONT} fontSize="10" fill="#222">0</text>
    <text x="478" y="548" fontFamily={FONT} fontSize="10" fill="#222">15</text>
    <text x="605" y="548" fontFamily={FONT} fontSize="10" fill="#222">30 (mm)</text>
  </CanvasSvg>
);

const TRAY = [
  <g><rect x="3" y="2" width="7" height="10" fill="#777" /><circle cx="11" cy="11" r="4.500" fill="#2a9030" /><path d="M9 11l2 2 3-4" stroke="#fff" fill="none" /></g>,
  <g><rect x="2" y="2" width="12" height="12" fill="#60a0e0" stroke="#e08020" strokeWidth="1.500" /><path d="M4 6h8M4 9h8" stroke="#fff" /></g>,
  <g><path d="M4 1v14M4 2h8v6H4" fill="#eee" stroke="#666" /><circle cx="11" cy="11" r="4" fill="#e02020" /><path d="M9.500 9.500l3 3M12.500 9.500l-3 3" stroke="#fff" /></g>,
  <g><rect x="1" y="2" width="14" height="10" fill="#102060" stroke="#111" /><path d="M4 9l3-4 2 3 2-2" stroke="#8cf" fill="none" /><rect x="4" y="12" width="8" height="2" fill="#333" /></g>,
  <g><path d="M2 6h3l4-3v10l-4-3H2z" fill="#e8a070" stroke="#a03010" /><path d="M11 5c1 2 1 4 0 6M13 3c2 3 2 7 0 10" stroke="#444" fill="none" /></g>,
  <g><path d="M1 8l3-4h9l2 4v4H1z" fill="#c8c8d0" stroke="#888" /><path d="M5 10l3 3 6-7" stroke="#30b030" strokeWidth="2" fill="none" /></g>,
  <g><rect x="1" y="1" width="14" height="14" rx="2" fill="#d81020" /><path d="M4 12c2-2 3-6 4-8 1 3 1 6 4 7" stroke="#fff" strokeWidth="1.700" fill="none" /></g>,
  <g><rect x="2" y="2" width="5" height="11" fill="#aaa" stroke="#555" /><rect x="8" y="4" width="4" height="7" fill="#ccc" stroke="#555" /><path d="M8 9l7 6M15 9l-7 6" stroke="#e01010" strokeWidth="1.800" /></g>,
  <g><path d="M2 6h3l4-3v10l-4-3H2z" fill="#ddd" stroke="#666" /><path d="M11 5c1 2 1 4 0 6M13 3c2 3 2 7 0 10" stroke="#666" fill="none" /></g>,
];

export default function App() {
  return (
    <Page>
      <Global />
      <TitleBar>
        <AppLogo s={11} />
        <TitleText>Ansoft HFSS&nbsp; - 20151202_kushelev_bubenchik - HFSSDesign1 - 3D Modeler - SOLVED - [20151202_kushelev_bubenchik - HFSSDesign1 - Modeler]</TitleText>
        <Caption />
      </TitleBar>
      <MenuBar>
        <Ic s={12}><rect x="1" y="2" width="14" height="12" fill="#c8d0e0" stroke="#556" /><rect x="1" y="2" width="14" height="3" fill="#2050a0" /><rect x="9" y="7" width="4" height="5" fill="#40a0c0" /></Ic>
        <MenuList>{MENUS.map(([m, w]) => <MenuItem key={m} $w={w}>{m}</MenuItem>)}</MenuList>
        <Caption />
      </MenuBar>
      <Strip items={R1} h={23} />
      <Strip items={R2} h={24} />
      <Strip items={R3} h={22} />
      <Main>
        <LeftCol>
          <PaneHead><PaneTitle>Project Manager</PaneTitle><PaneBtn>▲</PaneBtn><PaneBtn>✕</PaneBtn></PaneHead>
          <ProjectWrap>
            <ProjectBox>
              <ProjectList>
                <ProjRow $bold $pad={0}>151202_kushelev</ProjRow>
                <ProjRow $bold $pad={3}>HFSSDesign1 (E</ProjRow>
                {PROJ.map(p => (
                  <ProjRow key={p} $pad={0}>
                    <ProjIcon><Ic s={13}>{PROJ_ICONS[p]}</Ic></ProjIcon>
                    <ProjLabel $sel={p === 'Analysis'}>{p}</ProjLabel>
                  </ProjRow>
                ))}
                <ProjRow $pad={3}>Definitions</ProjRow>
              </ProjectList>
              <HScroll>
                <ScrollBtn $dir="l" />
                <ScrollTrack $pad={12}><Thumb $w={22} /></ScrollTrack>
                <ScrollBtn $dir="r" />
              </HScroll>
            </ProjectBox>
            <Tab>Project</Tab>
          </ProjectWrap>
          <Divider />
          <PaneHead><PaneTitle>Properties</PaneTitle><PaneBtn>▲</PaneBtn><PaneBtn>✕</PaneBtn></PaneHead>
          <PropsBox />
        </LeftCol>
        <TreeCol>
          <TreeGuide width="60" height="440">
            <path d="M6.500 14V196M21.500 26V51M36.500 38V172M21.500 208V220" stroke="#aaa" strokeDasharray="1 1" fill="none" />
          </TreeGuide>
          <TreeBody>
            {TREE.map((r, i) => (
              <TreeRow key={i} $pad={r.p || 0}>
                {r.ex && <Expander>{r.ex}</Expander>}
                {r.icon && <Ic s={13}>{r.icon}</Ic>}
                {r.t && <span>{r.t}</span>}
              </TreeRow>
            ))}
          </TreeBody>
          <HScroll>
            <ScrollBtn $dir="l" />
            <ScrollTrack $pad={3}><Thumb $w={11} /></ScrollTrack>
            <ScrollBtn $dir="r" />
          </HScroll>
        </TreeCol>
        <CanvasWrap><Viewport /></CanvasWrap>
      </Main>
      <DockBar>
        <MiniWin>
          <Ic s={12}><rect x="1" y="2" width="14" height="12" fill="#c8d0e0" stroke="#556" /><rect x="1" y="2" width="14" height="3" fill="#2050a0" /></Ic>
          <MiniTitle>Solutions: 2...</MiniTitle>
          <MiniBtn><Ic s={8}><path d="M6 2h8v7h-3M2 6h8v8H2z" fill="none" stroke="#000" strokeWidth="2" /></Ic></MiniBtn>
          <MiniBtn><Ic s={8}><rect x="2" y="2" width="12" height="12" fill="none" stroke="#000" strokeWidth="2" /></Ic></MiniBtn>
          <MiniBtn><Ic s={8}><path d="M3 3l10 10M13 3L3 13" stroke="#000" strokeWidth="2.600" /></Ic></MiniBtn>
        </MiniWin>
        <StatusField>Passes did not converge based on specified criteria. (10:06:43 AM</StatusField>
        <Spinner><span>▲</span><span>▼</span></Spinner>
        <DockClose>✕</DockClose>
        <CmdInput />
      </DockBar>
      <Taskbar>
        <StartBtn>
          <Ic s={13}><path d="M2 3l5-1v5H2z" fill="#e04020" /><path d="M8 2l6-1v6H8z" fill="#40b030" /><path d="M2 8h5v5l-5-1z" fill="#2070e0" /><path d="M8 8h6v6l-6-1z" fill="#f0c020" /></Ic>
          Start
        </StartBtn>
        <TaskIcon $w={18} $ml={11}><Ic s={16}><path d="M4 9h10a6 6 0 1 0-1 3" fill="none" stroke="#2090e0" strokeWidth="2.200" /><path d="M1 13c2 3 10-3 13-11" fill="none" stroke="#e0b020" strokeWidth="1.200" /></Ic></TaskIcon>
        <TaskIcon $w={24} $ml={5} $raised><Ic s={16}><path d="M1 5h5l1 1h8v8H1z" fill="#e8d060" stroke="#a08020" /><rect x="3" y="8" width="10" height="4" fill="#60b0e0" /></Ic></TaskIcon>
        <TaskIcon $w={18} $ml={5}><Ic s={15}><rect x="1" y="1" width="14" height="14" rx="2" fill="#4090e0" /><rect x="3" y="3" width="10" height="10" rx="2" fill="#fff" /><path d="M6 4.500l5 3.500-5 3.500z" fill="#f08010" /></Ic></TaskIcon>
        <TaskIcon $w={24} $ml={4} $raised><Ic s={16}><circle cx="7" cy="9" r="5.500" fill="#a8c8e8" stroke="#557" /><circle cx="5" cy="9" r="1" fill="#e04020" /><circle cx="8" cy="7" r="1" fill="#40a040" /><path d="M10 6l5-5" stroke="#e08020" strokeWidth="1.500" /></Ic></TaskIcon>
        <TaskIcon $w={25} $ml={3} $active><AppLogo s={14} /></TaskIcon>
        <Tray>
          {TRAY.map((t, i) => <TrayIcon key={i}><Ic s={15}>{t}</Ic></TrayIcon>)}
          <Clock>10:07 AM</Clock>
          <TrayIcon $w={16}><Ic s={13}><rect x="1" y="2" width="14" height="12" fill="#2060b0" stroke="#444" /><path d="M1 10h14" stroke="#80c0f0" /></Ic></TrayIcon>
        </Tray>
      </Taskbar>
    </Page>
  );
}
